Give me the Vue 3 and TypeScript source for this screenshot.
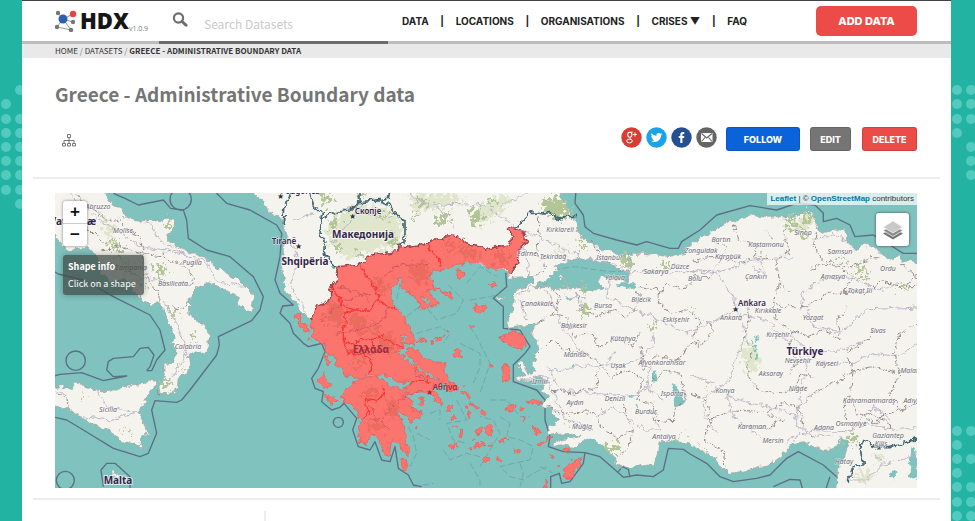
<script setup lang="ts">
import { ref } from 'vue'

interface Label {
  text: string
  x: number
  y: number
}

const search = ref('')

const navLinks: string[] = ['DATA', 'LOCATIONS', 'ORGANISATIONS', 'CRISES ▼', 'FAQ']

const leftDots: number[][] = [
  [20, 90], [6, 104], [6, 119], [20, 119], [6, 133], [20, 133], [6, 147], [20, 147],
  [6, 161], [20, 161], [6, 175], [20, 175], [6, 190], [20, 190], [20, 204],
]
const rightDots: number[][] = [
  [6, 90], [20, 90], [6, 104], [20, 104], [6, 119], [20, 119], [6, 133], [20, 147], [20, 161], [20, 175],
  [6, 431], [20, 431], [6, 445], [6, 459], [20, 459], [6, 473], [6, 487], [20, 487], [6, 502], [20, 502], [6, 516], [20, 516],
]

// Geography is drawn on a grid three times finer than the map's own units.
const land: string[] = [
  'M155 569L307 569 325 595 340 615 365 630 372 645 390 655 420 662 455 662 485 665 500 655 525 658 528 672 515 690 500 705 510 725 535 742 580 760 615 775 650 805 690 825 725 845 755 875 763 895 750 940 730 930 710 905 715 890 690 875 665 870 645 855 620 847 590 865 570 895 562 905 575 920 562 940 590 960 625 990 628 1045 615 1058 590 1055 565 1060 568 1100 562 1120 535 1135 530 1170 515 1182 480 1180 477 1160 495 1135 495 1095 520 1085 532 1060 520 1030 525 1015 510 970 490 930 480 910 450 915 425 895 400 870 395 845 365 840 335 845 315 825 300 820 300 790 285 760 260 740 230 750 205 752 185 735 155 700Z',
  'M150 1165L190 1155 195 1168 215 1168 225 1150 245 1150 255 1170 300 1172 350 1170 390 1155 440 1150 468 1138 470 1150 450 1175 430 1210 415 1245 435 1270 442 1295 420 1320 422 1342 390 1332 355 1320 330 1290 290 1282 260 1260 230 1242 200 1225 150 1220Z',
  'M330 1415L345 1418 358 1430 348 1434 335 1424Z',
  'M740 565L790 600 805 635 845 655 850 680 865 710 850 735 850 760 845 805 850 835 860 880 890 915 915 945 930 958 1100 850 1300 760 1525 815 1530 835 1600 832 1605 845 1560 870 1540 885 1545 892 1570 875 1650 835 1670 810 1660 795 1700 782 1740 775 1810 785 1855 800 1865 810 1890 805 1880 780 1840 755 1800 745 1760 725 1730 690 1725 670 1715 645 1695 615 1675 565Z',
  'M1870 760L1930 760 2010 770 2055 760 2065 740 2090 720 2130 700 2170 675 2250 645 2300 652 2345 650 2380 655 2420 635 2445 650 2440 675 2470 700 2510 685 2535 690 2540 720 2570 750 2590 735 2630 745 2645 765 2680 780 2695 767 2710 783 2775 790V1480H2510L2505 1460 2510 1430 2520 1390 2545 1345 2540 1320 2525 1310 2515 1330 2500 1350 2470 1350 2440 1340 2410 1325 2380 1330 2340 1370 2305 1395 2250 1410 2190 1420 2165 1405 2140 1370 2110 1355 2060 1330 2010 1322 1978 1325 1970 1370 1965 1395 1930 1390 1895 1405 1850 1395 1840 1370 1810 1340 1780 1315 1750 1320 1720 1345 1700 1335 1660 1340 1660 1325 1740 1310 1710 1300 1650 1305 1640 1290 1680 1260 1655 1245 1660 1230 1625 1220 1630 1205 1645 1190 1625 1170 1645 1145 1600 1130 1610 1145 1555 1140 1550 1125 1575 1128 1555 1090 1570 1088 1585 1122 1610 1115 1595 1095 1610 1080 1600 1060 1615 1040 1605 1025 1615 1020 1595 1005 1600 985 1610 972 1525 985 1530 950 1545 890 1595 860 1650 860 1660 870 1740 860 1760 875 1820 870 1810 860 1795 840 1805 832 1850 835 1880 850 1890 810 1860 810 1865 795 1895 805 1890 780Z',
  'M1485 892l20-6 8 8-12 6zM1675 832l14-6 4 8-12 4z',
]

const greece: string[] = [
  'M930 958L945 940 950 915 985 905 995 880 992 865 1005 850 1015 832 1010 815 1015 800 1080 792 1110 765 1155 760 1190 755 1195 735 1230 742 1280 730 1295 720 1330 720 1340 707 1370 710 1395 725 1435 738 1455 750 1490 740 1530 735 1535 710 1525 690 1540 682 1575 700 1582 730 1560 745 1550 790 1530 818 1515 805 1470 805 1445 790 1410 788 1380 792 1355 800 1330 812 1300 810 1285 835 1305 845 1300 862 1325 870 1350 882 1360 897 1340 895 1318 868 1300 870 1280 875 1315 905 1312 925 1290 915 1275 888 1260 888 1285 915 1285 927 1260 922 1245 890 1210 870 1200 855 1208 832 1190 842 1180 860 1170 870 1175 900 1185 920 1210 945 1220 970 1230 990 1250 1020 1245 1035 1210 1030 1218 1010 1200 1005 1212 1040 1190 1060 1210 1070 1225 1085 1245 1095 1250 1110 1275 1120 1280 1135 1310 1135 1325 1150 1300 1165 1320 1190 1325 1215 1310 1210 1295 1185 1270 1175 1235 1180 1215 1175 1215 1160 1240 1150 1180 1140 1150 1118 1135 1132 1110 1124 1080 1134 1055 1128 1030 1130 1025 1105 1010 1095 1005 1065 980 1060 972 1035 945 1015 935 990Z',
  'M1025 1190L1050 1160 1055 1148 1100 1130 1140 1136 1200 1172 1235 1182 1205 1187 1235 1195 1230 1220 1260 1235 1265 1250 1250 1255 1235 1265 1220 1245 1190 1230 1205 1270 1215 1295 1215 1320 1230 1350 1230 1368 1210 1355 1195 1330 1180 1320 1170 1335 1165 1365 1155 1370 1150 1350 1135 1320 1120 1300 1105 1320 1100 1335 1080 1325 1072 1280 1085 1260 1070 1230 1045 1210Z',
  'M1210 1060L1230 1045 1255 1050 1270 1070 1300 1085 1335 1088 1335 1115 1345 1145 1370 1158 1368 1172 1345 1172 1315 1135 1290 1120 1260 1105 1235 1075Z',
  'M880 945L905 940 903 960 925 985 925 997 900 985 895 965Z',
  'M972 1072L985 1068 990 1085 978 1098Z',
  'M950 1140L970 1115 975 1135 995 1155 985 1165 960 1155Z',
  'M975 1190L985 1182 1012 1200 995 1216Z',
  'M1205 1378L1220 1380 1222 1402 1207 1408Z',
  'M1368 822L1380 808 1395 818 1392 832 1380 838Z',
  'M1422 915L1440 918 1460 912 1455 935 1440 940 1430 935Z',
  'M1465 850L1480 845 1488 856 1475 862Z',
  'M1500 1015L1535 995 1565 1002 1580 1035 1560 1048 1530 1035Z',
  'M1505 1100L1525 1095 1533 1125 1515 1152 1507 1125Z',
  'M1575 1205L1600 1197 1625 1208 1605 1218Z',
  'M1517 1230L1530 1218 1552 1215 1535 1230 1520 1235Z',
  'M1743 1370L1740 1395 1710 1437 1690 1436 1695 1405 1715 1385Z',
  'M1610 1335L1650 1312 1652 1318 1622 1338Z',
  'M1637 1440l6 0-2 24h-9z',
  'M1385 1174L1400 1176 1412 1195 1405 1200zM1410 1205l20 15 8 10-12-3zM1452 1285l15-10 12 8-4 18-15 4zM1428 1290l16-9-2 18-10 4zM1493 1325l25-16 6 3-24 16z',
  'M1362 1050l10 0 12 16-10 6-10-8zM1257 1020l22 2-8 10zM1290 1018l12 8-10 4zM1308 1018l16-10 6 6-14 12z',
  'M1345 1220l8-8 4 10-10 14zM1355 1336l16-8 2 10-16 5zM1380 1292l8 2 4 16-8 0zM1405 1235l8 6-4 14-5-4zM1543 1350l18-4-2 12-12 4zM1455 1370l10 4-4 12-8-4zM1597 1275l10 12 2 18-6-4-8-20zM1648 1365l10 8-6 4z',
]

const islets: number[][] = [
  [1365, 1280, 5], [1360, 1253, 6], [1400, 1222, 4], [1450, 1240, 7], [1475, 1100, 4], [1567, 1225, 5], [1572, 1258, 4],
  [1415, 977, 5], [1250, 1285, 3], [1265, 1208, 6], [1240, 1230, 5], [930, 1020, 3], [1435, 1340, 7], [1450, 1332, 6],
  [1498, 1380, 5], [1410, 1346, 4], [1428, 1342, 4], [1472, 1335, 4], [1675, 1398, 3], [1702, 1350, 6], [1614, 1290, 5],
  [1620, 1298, 5], [1340, 993, 3], [1332, 1002, 3], [1350, 1338, 5], [1262, 1195, 4], [1390, 1160, 3], [1420, 1320, 3],
]

const regionLines: string[] = [
  'M1280 730L1300 760 1325 785 1320 800',
  'M1080 792L1090 820 1110 840 1135 890 1130 900 1165 920 1190 928',
  'M995 860L1015 890 1025 920 1060 930 1110 930 1135 895',
  'M1050 930L1030 945 1040 970 1030 990 1030 1020 1060 1030 1080 1015 1110 1020 1145 1010 1180 1030 1212 1045',
  'M1030 1020L1040 1055 1085 1065 1115 1075 1110 1120',
  'M1150 1158L1150 1180 1130 1200 1095 1195 1100 1225 1110 1235 1085 1250',
  'M1232 1150L1255 1140 1280 1150 1285 1130',
  'M1110 1020L1120 1035 1090 1050',
]

const regionRoads: string[] = [
  'M1110 900L1060 870 1010 860M960 960L1040 900 1110 880 1180 800 1290 790',
  'M1170 910L1150 960 1080 990 1010 1000M1210 1040L1120 1060 1030 1050',
  'M1270 1170L1200 1195 1150 1250 1110 1260M1110 1210L1130 1260 1170 1290M1300 1160L1240 1110',
]

const waterLines: string[] = [
  'M340 580L375 595 415 615 490 600 512 625 550 630 560 660 565 715 620 750 690 770 760 830 790 890 780 930 755 962 655 1010 658 1035 650 1065 570 1170 545 1200 530 1207 465 1202 455 1230 470 1300 445 1360 420 1370 340 1345 250 1290 200 1260 155 1250',
  'M155 810L175 822 250 840 350 895 450 945 480 990 495 1050 470 1080 455 1112 440 1112M155 1130L180 1123 245 1118 310 1142 380 1128 340 1130 320 1110 325 1085 340 1075 400 1070 420 1045 445 1042 462 1065 450 1100 440 1112',
  'M640 570L680 610 750 630 830 675 845 700 840 770 825 840 840 880 880 915 848 918 840 940 870 970 880 1000 910 1030 925 1040 945 1035 965 1030 975 1055 955 1105 935 1135 945 1165 970 1175 965 1205 995 1230 1020 1222 1032 1210 1070 1255 1058 1290 1075 1340 1110 1350 1125 1325 1145 1380 1170 1385 1185 1340 1195 1405 1225 1425 1240 1455 1265 1460',
  'M1728 570L1725 610 1750 645 1755 680 1780 700 1850 720 1910 735 1940 725 2010 745 2035 745 2045 725 2100 690 2150 645 2250 617 2330 630 2390 610 2445 615 2470 640 2470 665 2510 655 2550 675 2565 710 2620 705 2670 735 2710 760 2765 760',
  'M1517 818L1520 860 1480 895 1510 920 1510 985 1560 990 1590 1040 1575 1060 1540 1095 1540 1145 1610 1170 1635 1200 1635 1260 1650 1310 1645 1340 1690 1355 1755 1358 1800 1370 1840 1405 1870 1432 1910 1425 1960 1430 1990 1410 2005 1345 2050 1348 2070 1362 2120 1390 2160 1430 2200 1445 2270 1435 2310 1425 2360 1375 2395 1355 2470 1395 2510 1430 2540 1445',
  'M1755 1358L1750 1390 1710 1445 1685 1450 1678 1420 1652 1430 1652 1475',
  'M310 1460L303 1410 320 1390 345 1390 390 1430 390 1475M2320 1460L2370 1438 2400 1440 2410 1475M2490 1430L2475 1475M1855 1415L1868 1400 1885 1408 1890 1432',
]

const nationBorders: string[] = [
  'M965 660L960 700 975 720 970 760 995 795 1020 800M965 660L995 640 1050 630 1080 605 1130 600 1160 610 1180 640 1215 660 1215 725 1190 735 1190 760M930 570L940 620 970 635 965 660M1080 605L1080 570M1130 600L1165 595 1170 570M850 675L855 615 880 570',
  'M1550 682L1565 665 1590 640 1650 638 1675 658 1710 648 1725 650',
  'M2765 1310L2670 1340 2620 1340 2590 1320 2580 1345 2590 1395 2560 1400 2555 1425 2540 1445',
]

const provinceLines: string[] = [
  'M225 579L250 610 300 640 320 660 360 670M210 700L260 680 300 720 330 740M360 650L380 690 420 710 430 760 480 770 520 740M300 750L360 740 430 760M420 760L440 830 480 890 480 910M480 770L540 790 570 820 585 850M520 920L550 925 562 905M165 1180L200 1190 205 1220M480 1190L470 1170',
  'M1610 650L1620 700 1610 760 1640 800 1600 830M1770 720L1800 760 1830 790',
  'M1610 970L1650 945 1700 950 1720 1010 1770 1000 1800 1040 1860 1020 1900 1040 1920 1000M1660 870L1680 900 1670 930 1650 945M1730 880L1740 920 1790 950 1840 930 1880 950 1930 900 1910 870',
  'M1920 860L1980 870 2000 850 2050 870 2080 830 2130 830 2160 790M1980 870L1975 910 2020 940 2060 930 2100 960 2080 1010 2110 1040',
  'M1610 1060L1650 1020 1700 1050 1760 1060 1800 1090 1830 1130 1890 1110 1930 1140 1910 1200 1960 1210 1960 1260',
  'M1655 1170L1720 1180 1790 1160 1790 1120 1800 1090M1640 1220L1690 1240 1780 1235 1800 1280 1850 1310 1900 1290 1880 1250 1870 1210',
  'M1900 1290L1890 1340 1860 1370M1960 1260L2020 1265 2030 1220 2060 1200 2040 1120 2000 1110 1960 1140',
  'M1920 1040L1930 1110 1970 1070 2040 1080 2070 1030 2110 1040 2140 990 2110 960',
  'M2080 780L2150 770 2220 790 2270 770 2330 780 2370 750 2350 700 2360 650M2200 670L2210 720 2270 730 2270 770M2160 790L2180 740 2140 720',
  'M2330 780L2340 850 2320 910 2350 920 2430 920 2480 880 2530 880 2560 830 2520 800 2460 790 2430 810',
  'M2450 700L2440 740 2470 780 2550 800 2600 780 2640 770M2530 880L2600 880 2640 840 2700 860 2765 860M2700 790L2740 820 2720 860',
  'M2240 900L2250 960 2230 1020 2260 1040 2240 1100 2260 1160 2320 1180 2380 1170 2400 1120 2440 1130',
  'M2320 910L2330 970 2380 990 2370 1040 2390 1080 2370 1120M2380 990L2420 1010 2470 990 2520 1020 2510 960 2540 920',
  'M2070 1180L2120 1200 2130 1260 2110 1320 2170 1350 2175 1400M2130 1260L2200 1230 2290 1235 2350 1260 2300 1290 2240 1280M2300 1235L2350 1210 2400 1220 2410 1290 2440 1310',
  'M2400 1220L2440 1180 2520 1140 2560 1110 2540 1060 2600 1020 2620 990M2560 1110L2550 1180 2570 1240 2630 1270 2640 1250 2700 1230 2765 1200M2540 1260L2530 1200 2550 1180',
  'M2700 1000L2680 1060 2700 1120 2670 1180 2700 1230M2700 1000L2765 960M2560 1110L2620 1100 2690 1120M2600 1240L2660 1260 2680 1300',
]

const roads: string[] = [
  'M200 579L300 660 420 740 500 750 610 780 660 850 740 860M440 660L480 720 560 770M330 790L420 830 500 850 580 850M490 900L530 970 560 1060 500 1160M290 1170L320 1220 410 1235 340 1260 240 1250M165 1170L200 1185',
  'M1410 620L1440 610 1520 660 1560 690 1680 740 1760 780 1850 790M1560 690L1590 830M1500 620L1580 580M870 720L900 790 870 850 920 940M880 660L940 640M1000 640L1060 620 1130 650 1180 650M1100 600L1020 700 990 740M1230 579L1270 610 1400 615M1300 600L1360 680',
  'M1870 815L1960 815 2070 815 2140 810 2200 890 2210 940 2240 1000M2070 815L2150 820 2260 780 2380 770M1640 870L1690 990 1740 1050M1830 840L1820 890 1900 930 1960 950 2060 1000 2150 960 2200 930',
  'M1640 1115L1740 1100 1820 1095 1900 1090 1960 1040 1960 960M1640 1100L1680 1170 1780 1180 1900 1190 1960 1150M1560 1140L1640 1130 1660 1180 1700 1260 1780 1290M1820 1090L1840 1060',
  'M2240 1000L2180 1150 2110 1190 2110 1240 2150 1300M2180 1190L2260 1210 2380 1240 2400 1290 2540 1295M2180 1190L2200 1250 2280 1310M2070 1130L2150 1150M2220 940L2300 960 2350 1010 2420 1090 2400 1200 2390 1260',
  'M2260 800L2300 830 2280 780M2400 930L2410 880 2460 840 2550 830 2640 870 2700 850M2420 930L2440 980 2520 1000 2600 930 2765 920M2380 1010L2460 1090 2560 1090 2620 1060 2700 1070 2765 1020',
  'M2540 1295L2600 1270 2690 1290 2765 1280M2500 1310L2400 1300 2360 1330M2640 1400L2700 1380 2765 1350M2540 1440L2600 1440 2650 1390 2620 1350M2550 1290L2620 1220 2670 1260',
  'M1960 1220L1980 1290 1930 1290 1880 1250 1840 1220 1790 1250M1950 1100L1940 1160 1990 1200M1560 900L1580 960M1700 890L1750 890 1740 930M2440 720L2500 700 2560 740M2300 690L2320 720M2420 1060L2520 1050 2600 1020',
]

const greens: string[] = [
  'M330 725l20 8 10-8 6 12-16 12-20-8zM350 770l15-5 8 12-15 6zM495 670l15-8 12 10-15 18-12-6zM465 800l20-8 15 20-20 20-10-10zM480 820l10 15-8 6zM430 840l12 12-5 10-12-8zM508 935l10-8 15 5-8 20-12 2zM575 1005l15 0-5 20-10-2zM488 1145l20-10 10 18-20 12-10-6zM545 1090l10 15-12 8zM246 1180l8 4-4 10-6-4zM360 1285l8 10-6 4zM380 1285l8 8-6 10z',
  'M1245 605l30-10 20 8-30 14zM1235 635l15-5-5 25-12 5zM1310 650l30-14 10 20-20 16-20-4zM1410 640l20-15 15 10 12 22-30 15-20-8zM1450 605l20-12 20 5-20 15z',
  'M1625 602l35-14 30 14 10 18 20 30-30 0-12 8-30-18-25-10z',
  'M990 660l15-8 10 20-10 16-12-6zM1135 640l22 0 6 12-15 10zM1160 700l18 0 14 20-20 20zM1005 722l12 10 5 30-14-10zM1075 750l14 5-8 18-12-5zM955 582l30 0 20 12-30 18zM1065 580l30 0-16 16z',
  'M1740 925l15-10 20 8-5 15-15 10-12-8zM1860 770l15-10 20 20-4 30-18-8zM1985 790l15-8 8 20-15 8zM1825 1340l20-18 12 20 0 15-20 8-10-12zM1945 970l16 5 4 15-12 5zM1730 715l25 20 5 15-20-6zM1690 850l25 4-8 8zM1740 865l20-4 8 10-20 4z',
  'M2355 655l30 4 10 25-20 6-15-20zM2400 650l20-12 10 14-14 20zM2395 690l25 0 8 14-20 6zM2550 800l40 0 18 16-20 4zM2560 830l30 0 22 12-20 3zM2510 770l20 2 10 12-22-2zM2548 1295l20-2 4 28-18 10-6-10zM2690 855l40 10-10 8-20-4zM2290 760l8 0-2 15zM2120 1160l20 0-10 6zM2090 1335l20 4-6 6z',
  'M1700 1260l15 3 5 6-18-2zM1820 1208l14 0-4 6zM2030 1308l20 2 6 8-20-3zM2070 930l16-5 4 8zM2350 860l10 5-8 4z',
]

const paleGreens: string[] = [
  'M1000 650L1080 620 1160 625 1205 665 1205 720 1170 745 1100 755 1040 780 990 730 975 690Z',
  'M1410 640L1480 585 1540 590 1500 640 1440 680ZM2230 1040l25-10 20 40-5 50-25 0-20-40z',
  'M1220 580L1360 580 1400 600 1330 620 1250 640ZM2560 1420l40-10 30 20-40 20zM2620 1370l30-10 10 20-25 6z',
  'M2350 655l60 4 20-20 15 20-10 20-20 20-30-5-30-15z',
  'M300 640L340 680 350 730 330 740zM360 760l40 30 10 60-40-40zM1660 750l30-8 10 14-20 8z',
]

const lakes: string[] = [
  'M2245 1060l15-12 12 20-4 20-15 8-10-15zM2255 1020l20 20-10 20zM1955 1110l8-2 6 30-10 12zM2012 1145l25 20 20 45-30 10-5-40zM1885 1190l10-6 10 6-12 6zM2670 1415l20 0-8 22-12-8zM2735 1340l12 10 5 90-20-10 5-30-8-20z',
  'M1700 885l22 4-10 10-14-4zM1790 1100l25-12-4 8zM1850 850l50 0 10 8-20 8-40-6zM995 790l20 12-25 5zM848 840l10 15 0 20zM1710 1095l20 0-10 6zM2260 1005l18 14-8 8zM1905 1210l8 4-4 10z',
]

const forestPatches: string[] = [
  'M1120 830l40 20-10 40-30-20zM1380 730l50 20 10 30-50-10zM1220 800l60-20 10 60-40 10zM990 900l50 20-20 60-50-10zM1060 940l40 10-10 60-40-20zM1150 1000l40 10-10 50-50-10zM1120 1250l30 20-10 30-30-10zM1100 1160l40 10-10 30-40-10zM1480 760l40-10 10 40-40 5zM1060 1080l40-5-10 20-30 5zM1165 1190l30 30-10 40-20-20zM1340 720l30 5-10 30-30-5zM1100 960l30 10 10 40-30-20z',
]

const dashedWater: string[] = [
  'M1220 950L1270 910 1310 960 1370 940 1390 900 1340 850M1400 850L1440 800 1490 830M1200 850L1190 900M1250 1000L1320 980 1350 1000 1330 1030M1380 1030L1440 1060 1440 1100 1420 1150M1410 980L1430 1010 1470 1090 1440 1180',
  'M1225 1280L1240 1310 1250 1360 1230 1400M1290 1240L1320 1230 1320 1260M1250 1300L1290 1320M1330 1350L1350 1380 1400 1360 1440 1370M1440 1400L1470 1350 1500 1300 1480 1260 1440 1250',
  'M1500 1250L1530 1270 1520 1310 1560 1320 1600 1340 1590 1380 1540 1390 1500 1400 1530 1430 1570 1440 1600 1420 1640 1400M1470 1200L1520 1200 1560 1250 1590 1250M1370 1200L1400 1260 1340 1270 1360 1320 1400 1330',
  'M1410 1390L1440 1440 1440 1464M1560 1390L1570 1420 1560 1460M1240 1460L1300 1450M1620 1400L1660 1420M1180 1120L1230 1130M1660 810L1720 800 1830 815 1900 812M1560 900L1640 850M1410 900L1470 890 1500 880',
]

const places: Label[] = [
  { text: 'Abruzzo', x: 98, y: 209 }, { text: 'Molise', x: 123, y: 233 }, { text: 'Puglia', x: 192, y: 265 },
  { text: 'Campania', x: 131, y: 270 }, { text: 'Basilicata', x: 173, y: 286 }, { text: 'Calabria', x: 188, y: 349 },
  { text: 'Sicilia', x: 108, y: 412 }, { text: 'Kırklareli', x: 560, y: 232 }, { text: 'Edirne', x: 527, y: 256 },
  { text: 'Tekirdağ', x: 553, y: 259 }, { text: 'İstanbul', x: 609, y: 260 }, { text: 'Yalova', x: 615, y: 280 },
  { text: 'Sakarya', x: 656, y: 274 }, { text: 'Düzce', x: 680, y: 269 }, { text: 'Bolu', x: 695, y: 281 },
  { text: 'Zonguldak', x: 701, y: 253 }, { text: 'Karabük', x: 728, y: 259 }, { text: 'Bartın', x: 721, y: 242 },
  { text: 'Kastamonu', x: 766, y: 247 }, { text: 'Sinop', x: 803, y: 235 }, { text: 'Samsun', x: 840, y: 254 },
  { text: 'Ordu', x: 888, y: 271 }, { text: 'Amasya', x: 833, y: 279 }, { text: 'Tokat İli', x: 860, y: 293 },
  { text: 'Çankırı', x: 756, y: 279 }, { text: 'Çanakkale', x: 537, y: 306 }, { text: 'Bursa', x: 603, y: 308 },
  { text: 'Bilecik', x: 641, y: 302 }, { text: 'Balıkesir', x: 574, y: 328 }, { text: 'Eskişehir', x: 676, y: 322 },
  { text: 'Kütahya', x: 623, y: 341 }, { text: 'Ankara', x: 731, y: 320 }, { text: 'Kırıkkale', x: 768, y: 313 },
  { text: 'Yozgat', x: 813, y: 320 }, { text: 'Kırşehir', x: 778, y: 337 }, { text: 'Sivas', x: 878, y: 333 },
  { text: 'Manisa', x: 575, y: 357 }, { text: 'Uşak', x: 618, y: 368 }, { text: 'Afyonkarahisar', x: 662, y: 365 },
  { text: 'İzmir', x: 540, y: 384 }, { text: 'Aydın', x: 575, y: 405 }, { text: 'Denizli', x: 615, y: 401 },
  { text: 'Isparta', x: 672, y: 396 }, { text: 'Burdur', x: 646, y: 414 }, { text: 'Muğla', x: 582, y: 429 },
  { text: 'Antalya', x: 664, y: 439 }, { text: 'Konya', x: 725, y: 393 }, { text: 'Aksaray', x: 771, y: 376 },
  { text: 'Nevşehir', x: 798, y: 363 }, { text: 'Kayseri', x: 827, y: 366 }, { text: 'Niğde', x: 798, y: 391 },
  { text: 'Malatya', x: 913, y: 373 }, { text: 'Kahramanmaraş', x: 869, y: 403 }, { text: 'Adıyaman', x: 919, y: 403 },
  { text: 'Osmaniye', x: 851, y: 426 }, { text: 'Adana', x: 824, y: 430 }, { text: 'Mersin', x: 773, y: 443 },
  { text: 'Karaman', x: 752, y: 429 }, { text: 'Gaziantep', x: 888, y: 438 }, { text: 'Kilis', x: 881, y: 446 },
  { text: 'Hatay', x: 844, y: 464 }, { text: 'Giresun', x: 926, y: 279 },
]

const countries: Label[] = [
  { text: 'Македонија', x: 363, y: 238 }, { text: 'Shqipëria', x: 305, y: 265 },
  { text: 'Türkiye', x: 805, y: 355 }, { text: 'Malta', x: 118, y: 484 }, { text: 'Vaticanæ', x: 73, y: 225 },
]

const capitals: Label[] = [
  { text: 'Tiranë', x: 284, y: 244 }, { text: 'Скопје', x: 368, y: 214 }, { text: 'Podgorica', x: 300, y: 194 },
  { text: 'Ankara', x: 752, y: 306 },
]

const stars: number[][] = [[280, 196], [352, 216], [298, 246], [735, 309]]
</script>

<template>
  <div class="shell">
    <svg class="dots" aria-hidden="true">
      <circle v-for="(d, i) in leftDots" :key="i" :cx="d[0]" :cy="d[1]" r="5" />
    </svg>
    <div class="page">
      <header class="header">
        <a href="#" class="logo">
          <svg class="mark" width="22" height="22" viewBox="0 0 22 22" aria-hidden="true">
            <path d="M3 3L8 9 18 4M8 9L18 12M8 9L2 17 16 20 8 9" fill="none" stroke="#999" stroke-width="1" />
            <circle cx="8" cy="9" r="4.500" fill="#2b5fae" />
            <circle cx="18" cy="4" r="3.200" fill="#e8443f" />
            <circle cx="3" cy="3" r="2.200" fill="#777" />
            <circle cx="18" cy="12" r="2.200" fill="#777" />
            <circle cx="2" cy="17" r="2.200" fill="#777" />
            <circle cx="16" cy="20" r="2.200" fill="#777" />
          </svg>
          <span class="wordmark">HDX</span>
          <span class="version">v1.0.9</span>
        </a>
        <form class="search" @submit.prevent>
          <button type="submit" class="search-btn" aria-label="Search">
            <svg width="16" height="16" viewBox="0 0 16 16">
              <circle cx="6.500" cy="6" r="4.600" fill="none" stroke="#6e6e6e" stroke-width="2.200" />
              <path d="M10 9.500L14 13.200" stroke="#6e6e6e" stroke-width="3" stroke-linecap="round" />
            </svg>
          </button>
          <input v-model="search" type="text" placeholder="Search Datasets" aria-label="Search Datasets" />
        </form>
        <nav class="nav">
          <template v-for="(link, i) in navLinks" :key="link">
            <span v-if="i > 0" class="sep">|</span>
            <a href="#">{{ link }}</a>
          </template>
        </nav>
        <button type="button" class="btn add">ADD DATA</button>
      </header>

      <nav class="crumbs">
        <a href="#">HOME</a> <i>/</i> <a href="#">DATASETS</a> <i>/</i> <b>GREECE - ADMINISTRATIVE BOUNDARY DATA</b>
      </nav>

      <main class="main">
        <h1>Greece - Administrative Boundary data</h1>

        <div class="toolbar">
          <a href="#" class="org" aria-label="Organisation">
            <svg width="14" height="13" viewBox="0 0 14 13" fill="none" stroke="#777" stroke-width="1">
              <path d="M5.500.500h3v3h-3zM.500 9.500h3v2.500h-3zM5.500 9.500h3v2.500h-3zM10.500 9.500h3v2.500h-3zM7 3.500v6M2 9.500v-3h10v3" />
            </svg>
          </a>
          <div class="social">
            <a href="#" aria-label="Google Plus">
              <svg width="21" height="21" viewBox="0 0 21 21">
                <circle cx="10.500" cy="10.500" r="10.200" fill="#d93c34" />
                <g fill="none" stroke="#fff">
                  <ellipse cx="8.800" cy="7.800" rx="2.100" ry="2.500" stroke-width="1.100" />
                  <path d="M11.800 5.200H8.800M9.500 10.300c-1 .8-.6 1.300.3 1.900" stroke-width="0.900" />
                  <ellipse cx="8.500" cy="14" rx="2.800" ry="1.900" stroke-width="1" />
                  <path d="M14 5.500v4M12 7.500h4" stroke-width="0.900" />
                </g>
              </svg>
            </a>
            <a href="#" aria-label="Twitter">
              <svg width="21" height="21" viewBox="0 0 21 21">
                <circle cx="10.500" cy="10.500" r="10.200" fill="#19a3ea" />
                <path d="M5 14c1.500.1 2.400-.2 3.300-.9-1.300-.1-2-.8-2.300-1.600h1C5.800 11 5.200 10.200 5.200 9l1 .3C5.100 8.400 5 7.300 5.600 6.300c1.300 1.500 2.800 2.300 4.800 2.400-.3-2.300 2.300-3.600 4-2l1.500-.6-.9 1.400 1.300-.4-1.200 1.300c0 4.600-5.300 8.400-10.100 5.600z" fill="#fff" />
              </svg>
            </a>
            <a href="#" aria-label="Facebook">
              <svg width="21" height="21" viewBox="0 0 21 21">
                <circle cx="10.500" cy="10.500" r="10.200" fill="#244f91" />
                <path d="M9.300 16v-5H7.700V8.900h1.600V7.700c0-2 1-2.800 2.500-2.800h1.500v2h-1c-.7 0-.9.300-.9.900v1.100h1.900l-.2 2.100h-1.700v5z" fill="#fff" />
              </svg>
            </a>
            <a href="#" aria-label="Email">
              <svg width="21" height="21" viewBox="0 0 21 21">
                <circle cx="10.500" cy="10.500" r="10.200" fill="#646464" />
                <rect x="5" y="6" width="11.500" height="9" fill="#fff" />
                <path d="M5.500 6.500l5.200 4.500 5.300-4.500M5.500 14.500l3.500-4M16 14.500l-3.500-4" fill="none" stroke="#646464" stroke-width="1.100" />
              </svg>
            </a>
          </div>
          <button type="button" class="btn follow">FOLLOW</button>
          <button type="button" class="btn edit">EDIT</button>
          <button type="button" class="btn delete">DELETE</button>
        </div>
      </main>

      <hr />

      <section class="map">
        <svg class="canvas" viewBox="55 193 862 295" role="img" aria-label="Map of Greece">
          <defs>
            <filter id="coast" filterUnits="userSpaceOnUse" x="140" y="560" width="2640" height="930" color-interpolation-filters="sRGB">
              <feTurbulence type="fractalNoise" baseFrequency="0.050" numOctaves="3" seed="4" result="n" />
              <feDisplacementMap in="SourceGraphic" in2="n" scale="24" xChannelSelector="R" yChannelSelector="G" />
            </filter>
            <filter id="speckle" filterUnits="userSpaceOnUse" x="140" y="560" width="2640" height="930" color-interpolation-filters="sRGB">
              <feTurbulence type="fractalNoise" baseFrequency="0.080" numOctaves="2" seed="9" result="n" />
              <feDisplacementMap in="SourceGraphic" in2="n" scale="70" xChannelSelector="R" yChannelSelector="G" />
            </filter>
          </defs>
          <g transform="scale(0.333333)">
            <rect x="165" y="579" width="2590" height="888" fill="#80c2be" />
            <path v-for="(d, i) in waterLines" :key="'w' + i" :d="d" class="water" />
            <path v-for="(d, i) in dashedWater" :key="'dw' + i" :d="d" class="water-dash" />
            <circle cx="542" cy="598" r="32" class="water" />
            <circle cx="227" cy="1082" r="29" class="water" />
            <circle cx="196" cy="1441" r="27" class="water" />
            <circle cx="1015" cy="1267" r="15" class="water" />
            <g filter="url(#coast)">
              <path v-for="(d, i) in land" :key="'l' + i" :d="d" class="land" />
              <path v-for="(d, i) in lakes" :key="'k' + i" :d="d" fill="#80c2be" />
            </g>
            <g filter="url(#speckle)">
              <path v-for="(d, i) in paleGreens" :key="'pg' + i" :d="d" fill="#e0e6cc" />
              <path v-for="(d, i) in greens" :key="'g' + i" :d="d" fill="#b3c497" />
            </g>
            <g filter="url(#coast)">
              <path v-for="(d, i) in roads" :key="'r' + i" :d="d" class="road" />
              <path v-for="(d, i) in provinceLines" :key="'p' + i" :d="d" class="province" />
              <path v-for="(d, i) in nationBorders" :key="'n' + i" :d="d" class="nation" />
              <g class="greece">
                <path v-for="(d, i) in greece" :key="'gr' + i" :d="d" />
                <circle v-for="(c, i) in islets" :key="'i' + i" :cx="c[0]" :cy="c[1]" :r="c[2]" />
              </g>
            </g>
            <g filter="url(#speckle)">
              <path v-for="(d, i) in forestPatches" :key="'f' + i" :d="d" fill="#e5685a" opacity="0.7" />
            </g>
            <g filter="url(#coast)">
              <path v-for="(d, i) in regionRoads" :key="'rr' + i" :d="d" class="region-road" />
              <path v-for="(d, i) in regionLines" :key="'rl' + i" :d="d" class="region" />
              <path d="M930 958L945 940 950 915 985 905 995 880 992 865 1005 850 1015 832 1010 815 1015 800 1080 792 1110 765 1155 760 1190 755 1195 735 1230 742 1280 730 1295 720 1330 720 1340 707 1370 710 1395 725 1435 738 1455 750 1490 740 1530 735 1535 710 1525 690 1540 682 1575 700 1582 730 1560 745 1550 790 1530 818" class="frontier" />
            </g>
          </g>
          <text v-for="p in places" :key="p.text + p.x" :x="p.x" :y="p.y" class="place">{{ p.text }}</text>
          <text v-for="p in countries" :key="p.text" :x="p.x" :y="p.y" class="country">{{ p.text }}</text>
          <text v-for="p in capitals" :key="p.text" :x="p.x" :y="p.y" class="capital">{{ p.text }}</text>
          <text x="371" y="353" class="country greek">Ελλάδα</text>
          <text x="445" y="390" class="capital greek">Αθήνα</text>
          <text v-for="(s, i) in stars" :key="'s' + i" :x="s[0]" :y="s[1] + 3" class="star">★</text>
          <text x="429" y="395" class="star greek">★</text>
        </svg>
        <div class="left-controls">
          <div class="zoom">
            <button type="button" aria-label="Zoom in">+</button>
            <button type="button" aria-label="Zoom out">−</button>
          </div>
          <div class="info">
            <b>Shape info</b>
            <span>Click on a shape</span>
          </div>
        </div>
        <div class="attribution">
          <a href="#">Leaflet</a> | © <a href="#">OpenStreetMap</a> contributors
        </div>
        <button type="button" class="layers" aria-label="Layers">
          <svg width="22" height="22" viewBox="0 0 22 22">
            <path d="M1 14.500L11 20.500 21 14.500 11 9z" fill="#777" />
            <path d="M1 11.500L11 17.500 21 11.500 11 6z" fill="#8c8c8c" stroke="#fff" stroke-width="0.700" />
            <path d="M1 8L11 14 21 8 11 2z" fill="#c9c9c9" stroke="#fff" stroke-width="0.700" />
          </svg>
        </button>
      </section>

      <hr />
      <div class="columns"><div class="side"></div></div>
    </div>
    <svg class="dots" aria-hidden="true">
      <circle v-for="(d, i) in rightDots" :key="i" :cx="d[0]" :cy="d[1]" r="5" />
    </svg>
  </div>
</template>

<style>
body {
  margin: 0;
  background: #22b3a3;
}
</style>

<style scoped>
* {
  box-sizing: border-box;
}
.shell {
  display: grid;
  grid-template-columns: 22px 1fr 24px;
  min-height: 100vh;
  overflow: hidden;
  font-family: "Noto Sans CJK SC", "Noto Sans", sans-serif;
  color: #333;
}
a {
  color: inherit;
  text-decoration: none;
}
button {
  font: inherit;
  padding: 0;
  border: 0;
  cursor: pointer;
}
.dots {
  width: 100%;
  height: 100%;
  fill: #52cabd;
}
.page {
  display: flex;
  flex-direction: column;
  min-width: 0;
  background: #fff;
  border-top: 1px solid #444;
}
.header {
  display: flex;
  height: 43px;
  padding: 0 34px 0 33px;
  border-bottom: 3px solid #bdbdbd;
}
.logo {
  display: flex;
  width: 104px;
  align-items: flex-start;
  padding-top: 9px;
}
.mark {
  margin-right: 3px;
}
.wordmark {
  font: 800 22px/20px "Open Sans", sans-serif;
  color: #161616;
}
.version {
  padding-top: 13px;
  font: 7px/12px "Open Sans", sans-serif;
  color: #777;
}
.search {
  display: flex;
  width: 229px;
  margin-bottom: -3px;
  padding-left: 13px;
  border-bottom: 3px solid #6c6c6c;
}
.search-btn {
  display: flex;
  width: 32px;
  padding-top: 11px;
  background: none;
}
.search input {
  flex: 1;
  min-width: 0;
  padding: 4px 0 0;
  border: 0;
  outline: 0;
  background: none;
  font: 12px "Noto Sans CJK SC", "Noto Sans", sans-serif;
}
.search input::placeholder {
  color: #cacaca;
}
.nav {
  display: flex;
  align-items: center;
  padding-left: 14px;
  font: 700 10px/12px Inter, sans-serif;
  color: #222;
  white-space: nowrap;
}
.sep {
  width: 27px;
  text-align: center;
}
.btn {
  border-radius: 3px;
  font-family: Inter, sans-serif;
  font-weight: 800;
  color: #fff;
}
.add {
  width: 101px;
  height: 30px;
  margin: 5px 0 0 auto;
  border-radius: 5px;
  background: #ec4b48;
  font-size: 11px;
}
.crumbs {
  height: 14px;
  padding-left: 33px;
  background: #e9e9e9;
  font-size: 8px;
  line-height: 14px;
  color: #333;
}
.crumbs i {
  color: #777;
  font-style: normal;
}
.main {
  padding: 23px 34px 26px 33px;
}
h1 {
  margin: 0;
  font-size: 19px;
  line-height: 26px;
  font-weight: 700;
  color: #757575;
}
.toolbar {
  display: flex;
  align-items: flex-start;
  padding-top: 20px;
}
.org {
  display: flex;
  margin-right: auto;
  padding: 7px 0 0 7px;
}
.social {
  display: flex;
  gap: 4px;
  margin-right: 9px;
}
.social a {
  display: flex;
}
.follow,
.edit,
.delete {
  height: 24px;
  border: 1px solid rgba(0, 0, 0, 0.12);
  font-size: 9px;
}
.follow {
  width: 74px;
  margin-right: 10px;
  background: #0b63dc;
}
.edit {
  width: 41px;
  margin-right: 11px;
  background: #757575;
}
.delete {
  width: 55px;
  background: #ec4b48;
}
hr {
  width: calc(100% - 22px);
  height: 2px;
  margin: 0 auto;
  border: 0;
  background: #ececec;
}
.map {
  position: relative;
  margin: 14px 34px 10px 33px;
}
.canvas {
  display: block;
  width: 100%;
  height: auto;
  font-family: "Noto Sans", sans-serif;
}
.land {
  fill: #f4f3ed;
  stroke: #aaa3a3;
  stroke-width: 2;
}
.water,
.water-dash,
.road,
.province,
.nation,
.region,
.region-road,
.frontier {
  fill: none;
  stroke-linejoin: round;
}
.water {
  stroke: #5b7084;
  stroke-width: 4;
}
.water-dash {
  stroke: #6a9aa0;
  stroke-width: 2;
  stroke-dasharray: 20 8;
}
.road {
  stroke: #bdb6c9;
  stroke-width: 3;
}
.province {
  stroke: #958a8e;
  stroke-width: 3;
  stroke-dasharray: 20 5 6 5;
}
.nation {
  stroke: #446672;
  stroke-width: 5;
}
.greece {
  fill: #fb746d;
  stroke: #ee5350;
  stroke-width: 2;
}
.region {
  stroke: #fb3535;
  stroke-width: 4;
}
.region-road {
  stroke: #cf5560;
  stroke-width: 3;
}
.frontier {
  stroke: #9b4450;
  stroke-width: 4;
}
.place,
.country,
.capital,
.star {
  text-anchor: middle;
  paint-order: stroke;
  stroke: rgba(255, 255, 255, 0.7);
  stroke-width: 1px;
}
.place {
  font-size: 7px;
  font-style: italic;
  fill: #6c6876;
}
.country {
  font-size: 10px;
  font-weight: 700;
  fill: #352649;
  stroke-width: 2px;
}
.capital {
  font-size: 8px;
  font-weight: 600;
  fill: #352649;
}
.star {
  font-size: 8px;
  fill: #333;
}
.greek {
  fill: #9c2c40;
  stroke: none;
}
.left-controls {
  position: absolute;
  top: 8px;
  left: 8px;
}
.zoom {
  display: flex;
  flex-direction: column;
  width: 24px;
  border-radius: 3px;
  background: #fff;
  box-shadow: 0 0 3px rgba(0, 0, 0, 0.5);
}
.zoom button {
  height: 22px;
  background: none;
  font: 700 17px/22px "Liberation Sans", sans-serif;
  color: #111;
}
.zoom button + button {
  height: 23px;
  border-top: 1px solid #ccc;
}
.info {
  display: flex;
  flex-direction: column;
  min-width: 81px;
  margin-top: 9px;
  padding: 3px 5px;
  border-radius: 3px;
  background: rgba(65, 75, 70, 0.75);
  box-shadow: 0 0 6px rgba(0, 0, 0, 0.3);
  font-size: 9px;
  line-height: 17px;
  color: #fff;
}
.attribution {
  position: absolute;
  top: 0;
  right: 0;
  padding: 0 3px;
  background: rgba(255, 255, 255, 0.7);
  font: 8px/12px "Liberation Sans", sans-serif;
  color: #333;
}
.attribution a {
  color: #0078a8;
  font-weight: 700;
}
.layers {
  position: absolute;
  top: 20px;
  right: 8px;
  display: flex;
  width: 33px;
  height: 33px;
  align-items: center;
  justify-content: center;
  border-radius: 3px;
  background: #fff;
  box-shadow: 0 0 3px rgba(0, 0, 0, 0.6);
}
.columns {
  display: flex;
  flex: 1;
  padding-top: 11px;
}
.side {
  width: 244px;
  border-right: 2px solid #ececec;
}
</style>
